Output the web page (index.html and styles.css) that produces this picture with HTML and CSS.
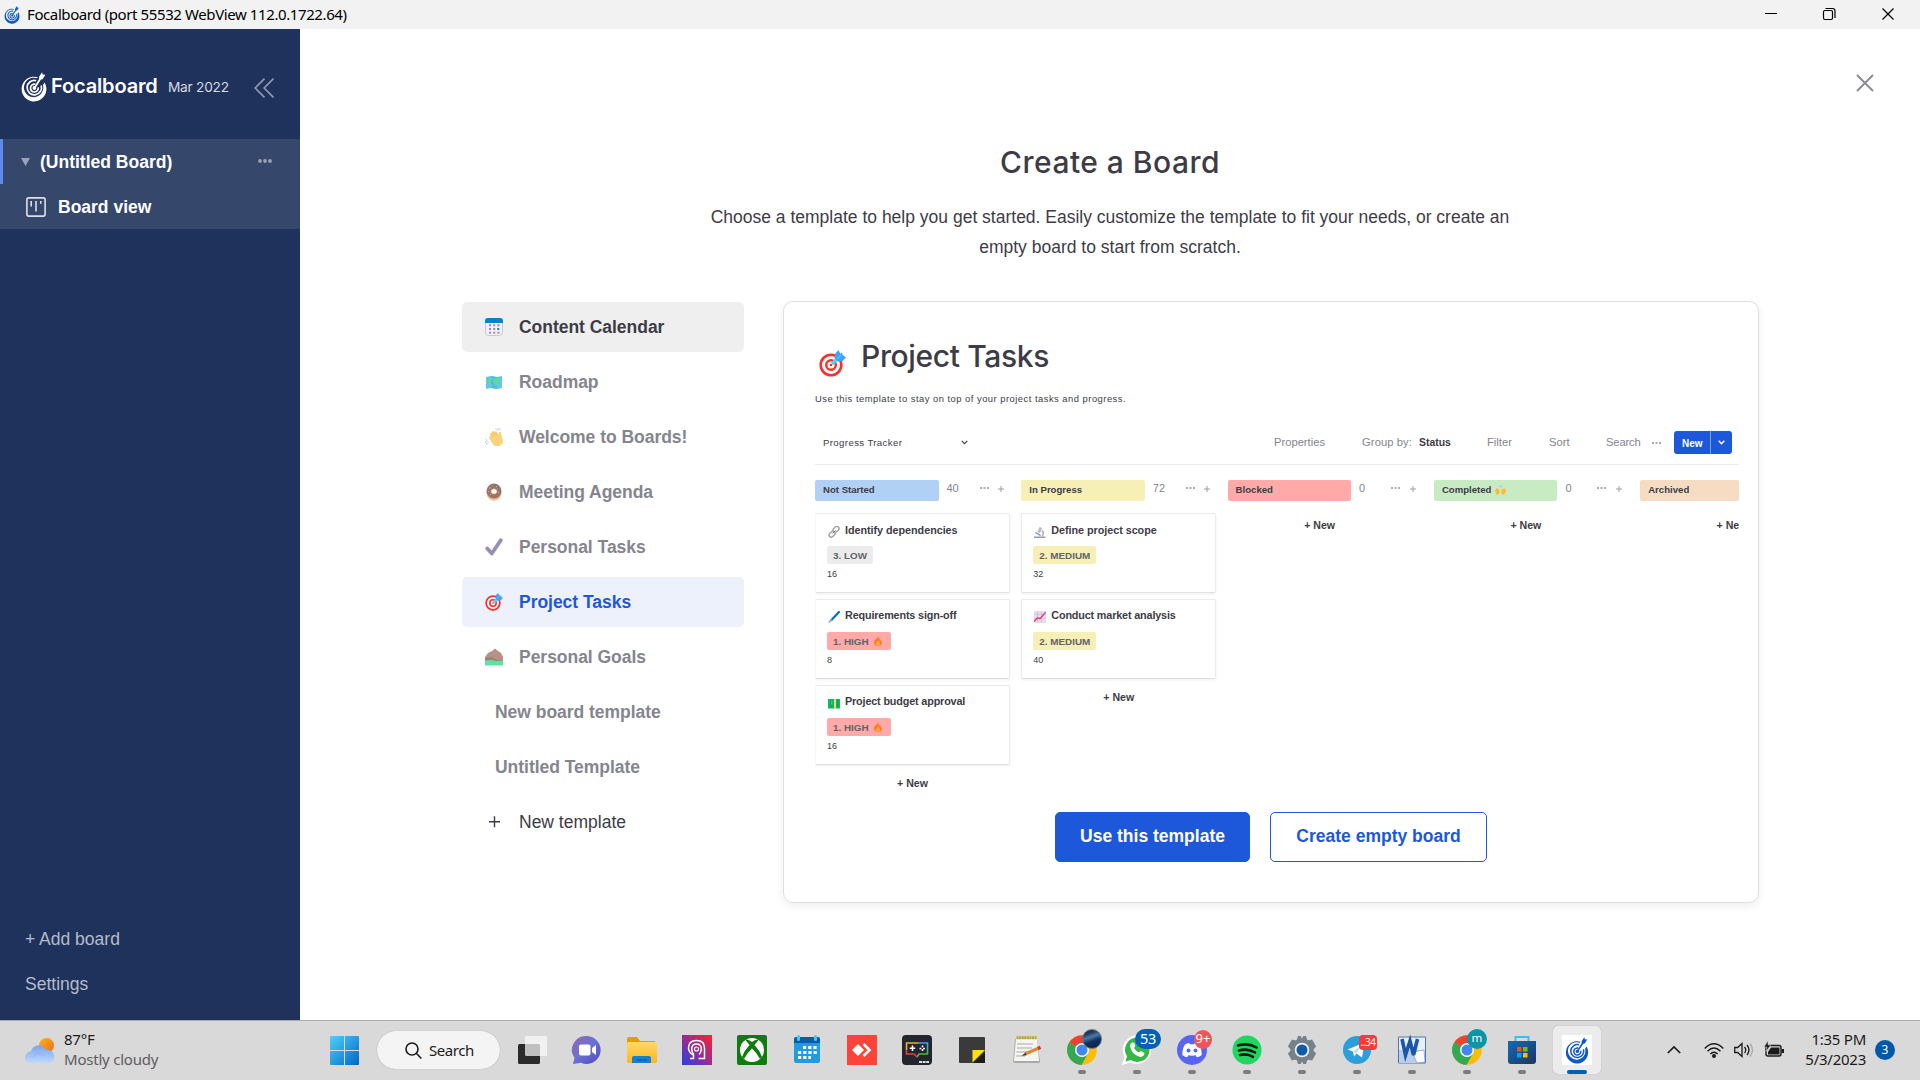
FILE: index.html
```html
<!DOCTYPE html>
<html lang="en">
<head>
<meta charset="utf-8">
<title>Focalboard</title>
<link rel="stylesheet" href="styles.css">
</head>
<body>
<svg class="defs" aria-hidden="true">
  <symbol id="focal" viewBox="0 0 26 30">
    <path fill="currentColor" fill-rule="evenodd" d="M17 5.300A12.400 12.400 0 1 0 23.600 10.600L22 13A9.700 9.700 0 1 1 15.800 6.300z"/>
    <path fill="currentColor" d="M1 19.500a12.300 10.200 0 0 0 24 0q-4 6.300-12 6.300T1 19.500z"/>
    <g fill="none" stroke="currentColor" stroke-width="1.700"><path d="M15.200 8.700A7.200 7.200 0 1 0 20.200 13.500"/><path d="M14.300 12.300A3.900 3.900 0 1 0 17.200 15.300"/></g>
    <circle cx="13.400" cy="16" r="1.900" fill="currentColor"/>
    <path stroke="currentColor" stroke-width="1.800" d="M13.400 16 20.500 5"/>
    <path fill="currentColor" d="m18.200 4.500 2.900-4.300.6 2.200 2.700.4-2.800 4.400-3.400.6z"/>
  </symbol>
  <symbol id="target" viewBox="0 0 27 27">
    <circle cx="12" cy="15" r="10.300" fill="#fff" stroke="#f8312f" stroke-width="2.600"/>
    <circle cx="12" cy="15" r="4.800" fill="#fff" stroke="#f8312f" stroke-width="2.400"/>
    <circle cx="12" cy="15" r="1.300" fill="#f8312f"/>
    <path d="m13 14 6-6" stroke="#50d2ff" stroke-width="3.400"/>
    <path fill="#3fa1fb" d="m15.500 8 .8-4.500L19.500 0l1.800 3.800 1.500-1.300.7 2.200 3.500 2.800-3.500 3.500-4.700.6z"/>
    <path stroke="#50d2ff" stroke-width="1.200" d="m18 9 4-4"/>
  </symbol>
  <symbol id="calendar" viewBox="0 0 18 18">
    <rect x=".5" y=".5" width="17" height="17" rx="3" fill="#f3eef8" stroke="#cdc4d6"/>
    <path fill="#0084ce" d="M0 5V3a3 3 0 0 1 3-3h12a3 3 0 0 1 3 3v2z"/>
    <path d="M4 7.200h11M4 11h8M4 14.700h11" stroke="#998ea4" stroke-width="1.900" stroke-dasharray="2 2.200"/><path fill="#0084ce" d="M12.300 10h2v2h-2z"/>
  </symbol>
  <symbol id="map" viewBox="0 0 18 18">
    <path fill="#63c6f0" d="m1 4 5-1 6 1 5-1v12l-5 1-6-1-5 1z"/><path fill="#3fb4e6" d="m6 3 6 1v12l-6-1z" opacity=".6"/>
    <path fill="#5fd996" d="M2 5h5l1 2-3 1-1 3-2-2zm7 0h6v3l-2 1-1 4-2-1-2-4zm-4 7h3l-1 2H5z"/>
  </symbol>
  <symbol id="wave" viewBox="0 0 18 18">
    <path fill="#fcd27a" d="m4.500 8.500 1-1L5 5.500l1.500-1 1 1-.3-2 1.600-.8 1.200 1.600.3-1 1.500.2 1.400 3.500 1-3 1.500-.3.800 4L17.800 12a5.500 5.500 0 0 1-10 4L4 10z"/>
    <path d="m8 9-2-3M10 8 7.500 4M12 7.500l-2-3" stroke="#f4b860" stroke-width=".8"/>
    <path d="M10 .8q3-.2 4 2.400M12.500 0q3 .5 3.300 2.500M1 11q0 2.500 2.800 3.300M0 13q.5 3 3 3.300" fill="none" stroke="#b5d3f5"/>
  </symbol>
  <symbol id="donut" viewBox="0 0 18 18">
    <ellipse cx="9" cy="10" rx="7.500" ry="7.800" fill="#f2c38c"/><circle cx="9" cy="8" r="7.500" fill="#9b7468"/>
    <ellipse cx="9" cy="8.400" rx="2.700" ry="2.400" fill="#fff" stroke="#f2cfa4"/>
    <path d="M4 5h1.500M11 3l1 1M13 10l1-1M5 11l1 1M3.500 8v1" stroke="#ceb0d6"/><path d="M7 3h1M12 6h1" stroke="#49b4e8"/>
  </symbol>
  <symbol id="check" viewBox="0 0 18 18"><path fill="none" stroke="#998eb5" stroke-width="3.800" stroke-linecap="round" stroke-linejoin="round" d="m2.300 10.500 4.500 5L15.800 2.200"/></symbol>
  <symbol id="mountain" viewBox="0 0 18 18"><path fill="#b59287" d="M0 13V9l3-4 4-2 3-2.500L13 3l3 2 2 4v4z"/><path fill="#8d6d65" d="m0 10 6-1 6 3 6 1v2H0z" opacity=".5"/><path fill="#5be3a2" d="M0 12.500q6-1 9 0t9 .5v4.500H0z"/></symbol>
  <symbol id="link" viewBox="0 0 12 12"><g fill="none" stroke="#a5a5a8" stroke-width="1.500"><rect x="5" y="1.200" width="6.500" height="4.300" rx="2.150" transform="rotate(-45 8 3.500)"/><rect x=".6" y="6" width="6.500" height="4.300" rx="2.150" transform="rotate(-45 4 8)"/></g><path d="m4.500 7.500 3-3" stroke="#777"/></symbol>
  <symbol id="microscope" viewBox="0 0 12 12"><path fill="#9a98a5" d="M0 10.500h11.500V12H0z"/><path d="M8 4.500q2.500 2.500 0 5.500" fill="none" stroke="#b8b7bf" stroke-width="1.800"/><path d="M4.500 6.500 7 1.500" stroke="#bebdc5" stroke-width="2.800"/><path d="m1.500 6.500 5 3" stroke="#4b91e8" stroke-width="1.300"/></symbol>
  <symbol id="pen" viewBox="0 0 12 12"><path d="M3.200 9.200 11 1" stroke="#0074ba" stroke-width="2.200" stroke-linecap="round"/><path d="m.8 11.500 3-3" stroke="#8ba9bd" stroke-width="1.500"/></symbol>
  <symbol id="chart" viewBox="0 0 12 12"><rect width="12" height="12" rx="1" fill="#e5dcef"/><path d="M0 3.500h12M0 7.500h12M3.500 0v12M7.500 0v12" stroke="#c7bdd3" stroke-width=".7"/><path d="m0 10.500 3.500-3.800 2.500 1L11.700 1.200" fill="none" stroke="#f92f60" stroke-width="1.300"/></symbol>
  <symbol id="money" viewBox="0 0 12 12"><path fill="#00c06b" d="M0 2h12v9.500H0z"/><path fill="#07a45e" d="M2 3.500h3V10H2zm7 0h2V10H9z"/><path fill="#f7d36a" d="M6 2h2v9.500H6z"/><path d="M3 5h1.500M3 7h1.500" stroke="#6ff2b5"/></symbol>
  <symbol id="fire" viewBox="0 0 8 10"><path fill="#ff7a35" d="M4.200 0Q4.500 2 6 3.500T8 6.500Q7.500 10 4 10T0 6.500Q0 4 2 3 3.800 2 4.200 0z"/><path fill="#ffb02e" d="M4.300 4.500Q6 6.500 6 8T4 9.600 2 8t2.300-3.500z"/></symbol>
  <symbol id="hands" viewBox="0 0 11 10"><path fill="#ffb92e" d="M0 5.500 1.500 3 4 4.500l.8 2L3.800 9.500H1.500zm11 0L9.500 3 7 4.500l-.8 2 1 3h2.300z"/><path d="M5.500 0v2M3.700.8l.8 1.500M7.300.8l-.8 1.500" stroke="#9ec6e8" stroke-width=".8"/></symbol>
  <symbol id="chrome" viewBox="0 0 30 30">
    <circle cx="15" cy="15" r="14.800" fill="#fbbc05"/>
    <path fill="#ea4335" d="M15 15 2.200 7.600A14.800 14.800 0 0 1 27.800 7.600L27.500 9H15z"/>
    <path fill="#34a853" d="M2.200 7.600A14.800 14.800 0 0 0 14.500 29.800L21 18z"/><path fill="#34a853" d="M2.200 7.600 9 19l6 2 5.500-2-6 10.800A14.800 14.800 0 0 1 2.200 7.600z"/>
    <circle cx="15" cy="15" r="7" fill="#fff"/><circle cx="15" cy="15" r="5.500" fill="#4285f4"/>
  </symbol>
  <linearGradient id="gWin" x2="1" y2="1"><stop stop-color="#4fd0fb"/><stop offset="1" stop-color="#0067c5"/></linearGradient>
  <linearGradient id="gChat" x2="1" y2="1"><stop stop-color="#9167aa"/><stop offset=".5" stop-color="#6a70d8"/><stop offset="1" stop-color="#4d49b8"/></linearGradient>
  <linearGradient id="gSq" x1="0" y1="1" x2="1" y2="0"><stop stop-color="#2440e8"/><stop offset=".55" stop-color="#a52a86"/><stop offset="1" stop-color="#f8242c"/></linearGradient>
  <linearGradient id="gFold" x2="0" y2="1"><stop stop-color="#ffd968"/><stop offset="1" stop-color="#fcb71c"/></linearGradient>
  <linearGradient id="gCloud" x2="0" y2="1"><stop stop-color="#78a4ee"/><stop offset="1" stop-color="#c3dbfa"/></linearGradient>
  <linearGradient id="gStore" x2="1" y2="1"><stop stop-color="#116bba"/><stop offset="1" stop-color="#20345f"/></linearGradient>
  <linearGradient id="gSun" x2="1" y2="1"><stop stop-color="#f6b41c"/><stop offset="1" stop-color="#ee6c1c"/></linearGradient>
</svg>

<header class="titlebar">
  <svg class="titlebar-logo"><use href="#focal"/></svg>
  <span class="titlebar-text">Focalboard (port 55532 WebView 112.0.1722.64)</span>
  <svg class="window-controls" viewBox="0 0 130 14" fill="none" stroke="#000"><path d="M0 6.500h12"/><rect x="58.500" y="3.500" width="9" height="9" rx="1.500" stroke-width="1.200"/><path d="M60.500 1.500h7q2.500 0 2.500 2.500v7" stroke-width="1.200"/><path d="m117.500 1.500 11 11m0-11-11 11" stroke-width="1.200"/></svg>
</header>

<div class="app">
  <aside class="sidebar">
    <div class="brand">
      <svg class="brand-logo"><use href="#focal"/></svg>
      <span class="brand-name">Focalboard</span>
      <span class="brand-version">Mar 2022</span>
      <svg class="collapse" viewBox="0 0 20 20" fill="none" stroke="#8f99ae" stroke-width="1.700"><path d="M10.500.7 1.200 10l9.300 9.300M19.500.7 10.200 10l9.300 9.300"/></svg>
    </div>
    <nav class="boards">
      <div class="board-row active">
        <svg class="tri" viewBox="0 0 9 8"><path fill="#9aa3b5" d="M0 0h9L4.500 8z"/></svg>
        <span>(Untitled Board)</span>
        <svg class="dots" viewBox="0 0 14 4" fill="#9aa3b5"><circle cx="2" cy="2" r="1.900"/><circle cx="7" cy="2" r="1.900"/><circle cx="12" cy="2" r="1.900"/></svg>
      </div>
      <div class="board-row view">
        <svg class="view-icon" viewBox="0 0 20 20" fill="none" stroke="#dde0e7" stroke-width="1.600"><rect x=".9" y=".9" width="18.200" height="18.200" rx="1.800"/><path d="M5.200 4v5.500M10 4v10.500M14.800 4v2.800"/></svg>
        <span>Board view</span>
      </div>
    </nav>
    <div class="sidebar-foot"><div>+ Add board</div><div>Settings</div></div>
  </aside>

  <main class="main">
    <svg class="close" viewBox="0 0 18 18" stroke="#8b8c96" stroke-width="2"><path d="m1 1 16 16M17 1 1 17"/></svg>
    <h1>Create a Board</h1>
    <p class="intro">Choose a template to help you get started. Easily customize the template to fit your needs, or create an<br>empty board to start from scratch.</p>
    <div class="chooser">
      <ul class="templates">
        <li class="hover"><svg><use href="#calendar"/></svg>Content Calendar</li>
        <li><svg><use href="#map"/></svg>Roadmap</li>
        <li><svg><use href="#wave"/></svg>Welcome to Boards!</li>
        <li><svg><use href="#donut"/></svg>Meeting Agenda</li>
        <li><svg><use href="#check"/></svg>Personal Tasks</li>
        <li class="selected"><svg><use href="#target"/></svg>Project Tasks</li>
        <li><svg><use href="#mountain"/></svg>Personal Goals</li>
        <li class="plain">New board template</li>
        <li class="plain">Untitled Template</li>
        <li class="new"><svg viewBox="0 0 18 18" stroke="#3d3c46" stroke-width="1.400"><path d="M4 8.700h11M9.500 3.200v11"/></svg>New template</li>
      </ul>
      <section class="preview">
        <div class="preview-title"><svg><use href="#target"/></svg><h2>Project Tasks</h2></div>
        <p class="preview-desc">Use this template to stay on top of your project tasks and progress.</p>
        <div class="toolbar">
          <span class="view-name">Progress Tracker</span>
          <svg class="chev" viewBox="0 0 7 5" fill="none" stroke="#3d3c46" stroke-width="1.100"><path d="m.7.8 2.800 2.900L6.300.8"/></svg>
          <span class="t-props">Properties</span>
          <span class="t-group">Group by:</span><b class="t-status">Status</b>
          <span class="t-filter">Filter</span>
          <span class="t-sort">Sort</span>
          <span class="t-search">Search</span>
          <svg class="mini-dots" viewBox="0 0 9 2"><path d="M0 1h9" stroke="#909199" stroke-width="1.400" stroke-dasharray="2 1.500"/></svg>
          <div class="new-btn"><span>New</span><svg viewBox="0 0 7 5" fill="none" stroke="#fff" stroke-width="1.500"><path d="m.7.8 2.800 2.900L6.300.8"/></svg></div>
        </div>
        <div class="board">
          <div class="column">
            <div class="col-head"><span class="label blue">Not Started</span><span class="count">40</span><svg class="mini-dots" viewBox="0 0 9 2"><path d="M0 1h9" stroke="#909199" stroke-width="1.400" stroke-dasharray="2 1.500"/></svg><svg class="plus" viewBox="0 0 7 7" stroke="#909199"><path d="M0 3.500h7M3.500 0v7"/></svg></div>
            <div class="cards">
              <article class="card"><h3><svg><use href="#link"/></svg>Identify dependencies</h3><span class="tag grey">3. LOW</span><p>16</p></article>
              <article class="card"><h3><svg><use href="#pen"/></svg>Requirements sign-off</h3><span class="tag red">1. HIGH <svg><use href="#fire"/></svg></span><p>8</p></article>
              <article class="card"><h3><svg><use href="#money"/></svg>Project budget approval</h3><span class="tag red">1. HIGH <svg><use href="#fire"/></svg></span><p>16</p></article>
            </div>
            <div class="add">+ New</div>
          </div>
          <div class="column">
            <div class="col-head"><span class="label yellow">In Progress</span><span class="count">72</span><svg class="mini-dots" viewBox="0 0 9 2"><path d="M0 1h9" stroke="#909199" stroke-width="1.400" stroke-dasharray="2 1.500"/></svg><svg class="plus" viewBox="0 0 7 7" stroke="#909199"><path d="M0 3.500h7M3.500 0v7"/></svg></div>
            <div class="cards">
              <article class="card"><h3><svg><use href="#microscope"/></svg>Define project scope</h3><span class="tag yellow">2. MEDIUM</span><p>32</p></article>
              <article class="card"><h3><svg><use href="#chart"/></svg>Conduct market analysis</h3><span class="tag yellow">2. MEDIUM</span><p>40</p></article>
            </div>
            <div class="add">+ New</div>
          </div>
          <div class="column empty">
            <div class="col-head"><span class="label red">Blocked</span><span class="count">0</span><svg class="mini-dots" viewBox="0 0 9 2"><path d="M0 1h9" stroke="#909199" stroke-width="1.400" stroke-dasharray="2 1.500"/></svg><svg class="plus" viewBox="0 0 7 7" stroke="#909199"><path d="M0 3.500h7M3.500 0v7"/></svg></div>
            <div class="add">+ New</div>
          </div>
          <div class="column empty">
            <div class="col-head"><span class="label green">Completed <svg><use href="#hands"/></svg></span><span class="count">0</span><svg class="mini-dots" viewBox="0 0 9 2"><path d="M0 1h9" stroke="#909199" stroke-width="1.400" stroke-dasharray="2 1.500"/></svg><svg class="plus" viewBox="0 0 7 7" stroke="#909199"><path d="M0 3.500h7M3.500 0v7"/></svg></div>
            <div class="add">+ New</div>
          </div>
          <div class="column empty last">
            <div class="col-head"><span class="label orange">Archived</span></div>
            <div class="add">+ Ne</div>
          </div>
        </div>
        <div class="actions"><button class="primary">Use this template</button><button class="outline">Create empty board</button></div>
      </section>
    </div>
  </main>
</div>

<footer class="taskbar">
  <div class="weather">
    <svg viewBox="0 0 30 26"><circle cx="21.500" cy="7.500" r="7.500" fill="url(#gSun)"/><path fill="url(#gCloud)" d="M6 25.500A6 6 0 0 1 6 13.500 8 8 0 0 1 21 12a6.800 6.800 0 0 1 3 13.500z"/><path d="M8 19q5-7 11-1" fill="none" stroke="#7fa7ee" opacity=".6"/></svg>
    <div class="weather-text"><div>87°F</div><div class="dim">Mostly cloudy</div></div>
  </div>
  <svg class="start" viewBox="0 0 29 29" fill="url(#gWin)"><path d="M1 0h13v14H0V1a1 1 0 0 1 1-1zM15 0h13a1 1 0 0 1 1 1v13H15zM0 15h14v14H1a1 1 0 0 1-1-1zM15 15h14v13a1 1 0 0 1-1 1H15z"/></svg>
  <div class="search"><svg viewBox="0 0 17 17" fill="none" stroke="#1b1b1b" stroke-width="1.600"><circle cx="7" cy="7" r="6"/><path d="m11.300 11.300 5 5.200"/></svg><span>Search</span></div>
  <div class="apps">
    <div class="app-cell"><svg viewBox="0 0 30 30"><rect x="1" y="9" width="22" height="20" rx="1.500" fill="#2b2b2b"/><rect x="8" y="1" width="22" height="20" rx="1.500" fill="#fafafa" opacity=".72"/></svg></div>
    <div class="app-cell"><svg viewBox="0 0 30 30"><path fill="url(#gChat)" d="M15 1a14 14 0 1 1-6 26.800L1 29l1.500-6A14 14 0 0 1 15 1z"/><rect x="7" y="9.500" width="11.500" height="11" rx="2" fill="#fff"/><path fill="#fff" d="m20 13 4-3v10l-4-3z"/></svg></div>
    <div class="app-cell"><svg viewBox="0 0 30 30"><path fill="#e0a000" d="M0 4q0-2 2-2h8l3 4h15v9H0z"/><rect y="7" width="30" height="21" rx="1.500" fill="url(#gFold)"/><path fill="#1180d6" d="M5 28v-5q0-2 2-2h15q2 0 2 2v5z"/><path d="M10 25h10" stroke="#0a5096"/></svg></div>
    <div class="app-cell"><svg viewBox="0 0 30 30"><path fill="url(#gSq)" d="M0 0h30v30H0z"/><g fill="none" stroke="#fff" stroke-width="1.500"><path d="M8 23.500h3.500V20Q6.500 17.500 6.500 13q0-7.500 8-7.500t8 7.500v10.500h-6"/><path d="M12 19.500q-2.300-2-2.300-5.500 0-5 4.800-5t4.800 5q0 3.500-2.300 5.500"/></g><circle cx="14.500" cy="14" r="2" fill="none" stroke="#fff" stroke-width="1.200"/></svg></div>
    <div class="app-cell"><svg viewBox="0 0 30 30"><rect width="30" height="30" rx="2" fill="#107c10"/><circle cx="15" cy="15" r="12" fill="#fff"/><path fill="#107c10" d="M8 4.500q4-.5 7 2.500 3-3 7-2.500l-4.500 5.500q5 5 7.500 12l-2 2Q20 18 15 13.500 10 18 7 24l-2-2q2.500-7 7.500-12z"/></svg></div>
    <div class="app-cell"><svg viewBox="0 0 30 30"><rect x="2" y="3" width="26" height="25" rx="2" fill="#1f9be0"/><path fill="#0b5ca8" d="M2 8V4q0-2 2-2h22q2 0 2 2v4z"/><path stroke="#3ccbf4" stroke-width="3" stroke-linecap="round" d="M6.500 1.500v3M23.500 1.500v3"/><path stroke="#fff" stroke-width="3.200" stroke-dasharray="3.200 2" d="M11 12.500h14M6 17.500h19M6 22.500h13"/></svg></div>
    <div class="app-cell"><svg viewBox="0 0 30 30"><path fill="#fe4438" d="M0 0h30v30H0z"/><path fill="#fff" d="m5 15 6-6 6 6-6 6z"/><path fill="none" stroke="#fff" stroke-width="2.600" d="m16.500 9 6 6-6 6"/></svg></div>
    <div class="app-cell"><svg viewBox="0 0 30 30"><rect width="30" height="30" rx="4" fill="#23262f"/><g fill="none" stroke-width="1.600"><path stroke="#e9b32f" d="M4.500 15V8H16"/><path stroke="#4f9fe8" d="M16 8h9.500v6"/><path stroke="#4cbb45" d="M25.500 14v5H17l-2 3"/><path stroke="#e7403c" d="M4.500 15v4H12l3 3"/></g><path stroke="#fff" stroke-width="1.600" d="M10.500 10.500v5.500M7.700 13.300h5.500"/><path stroke="#fff" stroke-width="1.600" stroke-dasharray="1.800 1.800" d="M20.500 10.500v6M17.500 13.500h6"/><path d="M17 27h10" stroke="#ddd" stroke-width="2" stroke-dasharray="3 .6"/></svg></div>
    <div class="app-cell"><svg viewBox="0 0 30 30"><rect x="2" y="2" width="26" height="26" rx="1" fill="#3a3a3a"/><path fill="#1c1c1c" d="M16 28h12V17z"/><path fill="#fde014" d="M15.500 15H28L15.500 27.500z"/></svg></div>
    <div class="app-cell"><svg viewBox="0 0 30 30"><path fill="#aaa" d="M3 4h22l3 23q0 1-2 1H3q-2 0-1.800-2z"/><path fill="#f5f5f2" d="M4 4h21l2 22H2z"/><path stroke="#b9a22d" stroke-width="3" stroke-dasharray="2 .6" d="M4.500 2.800h20"/><path stroke="#a9a9a9" d="M5 9h16M5 13h15M4.500 17h11M4 21h9"/><path stroke="#d98b38" stroke-width="3.200" d="m13 19 14-6"/><path stroke="#c4373a" stroke-width="3.200" d="m26 13.500 2.500-1.200"/><path fill="#333" d="m9.500 20.800 4-3 1 2.500z"/></svg></div>
    <div class="app-cell run"><svg viewBox="0 0 30 30"><use href="#chrome"/></svg><i class="avatar earth"></i></div>
    <div class="app-cell run"><svg viewBox="0 0 30 30"><path fill="#fff" d="M15 0a14.500 14.500 0 1 1-6.500 27.500L0 30l2.500-8.500A14.500 14.500 0 0 1 15 0z"/><path fill="#35b845" d="M15 2.500A12.200 12.200 0 1 1 8.800 25L3.500 26.500 5 21.300A12.200 12.200 0 0 1 15 2.500z"/><path fill="#fff" d="M10 7.500q2-.5 2.500 1l.8 2.500-1.300 2q1.500 3 5 4.500l2-1.500 3.500 2q-.5 4-4.500 4Q9.500 19.500 8 11q0-2.500 2-3.500z"/></svg><i class="badge blue-badge">53</i></div>
    <div class="app-cell run"><svg viewBox="0 0 30 30"><circle cx="15" cy="15" r="15" fill="#5865f2"/><path fill="#fff" d="M10 8.500 8 9.500Q5 14 5.300 20q2 1.800 5 2.300l1-2q3.700.8 7.400 0l1 2q3-.5 5-2.300.3-6-2.700-10.500l-4-1.500-1 1.200h-4l-1-1.200z"/><circle cx="11.500" cy="15.500" r="2" fill="#5865f2"/><circle cx="18.500" cy="15.500" r="2" fill="#5865f2"/></svg><i class="badge red-badge">9+</i></div>
    <div class="app-cell run"><svg viewBox="0 0 30 30"><circle cx="15" cy="15" r="14.500" fill="#1ed760"/><path d="M6 10.500q10-3 18.500 2M7 15.500q8.500-2.500 16 2M8 20q7-1.800 13 1.800" fill="none" stroke="#0c1a10" stroke-width="2.600" stroke-linecap="round"/></svg></div>
    <div class="app-cell run"><svg viewBox="0 0 30 30"><g fill="#77818a"><circle cx="15" cy="15" r="11.500"/><path id="tooth" d="m9.500 6 1.500-5h8l1.500 5z"/><use href="#tooth" transform="rotate(60 15 15)"/><use href="#tooth" transform="rotate(120 15 15)"/><use href="#tooth" transform="rotate(180 15 15)"/><use href="#tooth" transform="rotate(240 15 15)"/><use href="#tooth" transform="rotate(300 15 15)"/></g><path fill="#d9d9d9" d="m13 0 2 3.500L17 0zM13 30l2-3.500 2 3.500z"/><circle cx="15" cy="15" r="7.300" fill="#eee"/><circle cx="15" cy="15" r="5.500" fill="#0f5ba8"/></svg></div>
    <div class="app-cell run"><svg viewBox="0 0 30 30"><circle cx="15" cy="15" r="14" fill="#2a9fdb"/><path fill="#fff" d="m5.500 14.500 17-7-2.500 15-5.500-4-2.500 3-1-5z"/><path d="m11 16.500 8.500-6-5 8" fill="#c3ddec"/></svg><i class="badge square-badge">..34</i></div>
    <div class="app-cell run"><svg viewBox="0 0 30 30"><path fill="#e8effa" stroke="#4a76b8" d="M1.500 2h27v26h-27z"/><path fill="#b9cdec" d="M2 15h20v13H2z"/><path fill="#fff" stroke="#6e93cc" stroke-width=".7" d="m15 17 12-2 1 12-8 1z"/><path fill="none" stroke="#1b55a8" stroke-width="3.600" d="m5 4 3.500 16L13 6l3.500 14L20.500 4"/></svg></div>
    <div class="app-cell run"><svg viewBox="0 0 30 30"><use href="#chrome"/></svg><i class="avatar teal">m</i></div>
    <div class="app-cell run"><svg viewBox="0 0 30 30"><path fill="none" stroke="#35c1f1" stroke-width="2" d="M8.500 7V2h13v5"/><path fill="url(#gStore)" d="M1 6h28v20q0 3-3 3H4q-3 0-3-3z"/><path fill="#f25022" d="M10 12h4.500v4.500H10z"/><path fill="#7fba00" d="M16 12h4.500v4.500H16z"/><path fill="#00a4ef" d="M10 18h4.500v4.500H10z"/><path fill="#ffb900" d="M16 18h4.500v4.500H16z"/></svg></div>
    <div class="app-cell run current"><span class="tile"><svg class="focal-app"><use href="#focal"/></svg></span></div>
  </div>
  <div class="tray">
    <svg class="caret" viewBox="0 0 14 8" fill="none" stroke="#1b1b1b" stroke-width="1.700"><path d="m.8 7 6.200-6 6.200 6"/></svg>
    <svg class="wifi" viewBox="0 0 20 15" fill="none" stroke="#1b1b1b" stroke-width="1.400"><path d="M.7 5.500q9.300-9.300 18.600 0M3.500 8.200q6.500-6.500 13 0M6.300 11q3.700-3.700 7.400 0"/><circle cx="10" cy="13" r="1.300" fill="#1b1b1b"/></svg>
    <svg class="vol" viewBox="0 0 20 16" fill="none" stroke="#1b1b1b" stroke-width="1.300"><path d="M.7 5.500h3L8 1.500v13L3.700 10.500h-3zM10.500 5q2.500 3 0 6M13 3q4 5 0 10"/><path d="M16 1.500q5 6.500 0 13" stroke="#aaa"/></svg>
    <svg class="bat" viewBox="0 0 20 16"><rect x="2" y="3.500" width="15" height="10.500" rx="2" fill="none" stroke="#1b1b1b" stroke-width="1.400"/><path d="M4 12.500V10l3-4.500h8.500v7z" fill="#1b1b1b"/><path d="M17.500 7H20v4h-2.500z" fill="#1b1b1b"/><path d="M4-1.200 0 5h3L2 9.500 6.800 3H4z" fill="#1b1b1b" stroke="#d9d9d9" stroke-width=".5"/></svg>
    <div class="clock"><div>1:35 PM</div><div>5/3/2023</div></div>
    <span class="notif">3</span>
  </div>
</footer>
</body>
</html>
```
FILE: styles.css
```css
* { box-sizing: border-box; margin: 0; padding: 0; }
body { width: 1920px; height: 1080px; display: flex; flex-direction: column; overflow: hidden; background: #fff; color: #3d3c46; font-family: "Liberation Sans", Arial, sans-serif; font-size: 17.5px; }
svg { display: block; flex: none; overflow: visible; }
.defs { position: absolute; width: 0; height: 0; }

.titlebar { height: 29px; flex: none; background: #f2f2f2; display: flex; align-items: center; padding-left: 4px; color: #000; font: 15px "Noto Sans", sans-serif; }
.titlebar-logo { width: 16px; height: 18px; color: #1158c7; }
.titlebar-text { margin-left: 7px; padding-bottom: 2px; letter-spacing: -.4px; white-space: nowrap; }
.window-controls { width: 130px; height: 14px; margin-left: auto; margin-right: 25px; margin-bottom: 1px; }

.app { flex: 1; display: flex; min-height: 0; }
.sidebar { width: 300px; flex: none; background: #1f325c; color: #fff; display: flex; flex-direction: column; }
.brand { height: 110px; display: flex; align-items: center; padding: 8px 0 0 21px; font-family: Inter, sans-serif; }
.brand-logo { width: 26px; height: 30px; margin-top: -2px; }
.brand-name { margin: -4px 0 0 4px; width: 106px; font-size: 20px; font-weight: 600; letter-spacing: -.15px; }
.brand-version { margin: -3px 0 0 11px; width: 60px; font-size: 13.700px; color: #d5d9e2; letter-spacing: -.25px; white-space: nowrap; }
.collapse { width: 20px; height: 20px; margin-left: 26px; }
.boards { background: #35476b; font-weight: bold; }
.board-row { height: 45px; display: flex; align-items: center; }
.board-row span { padding-top: 2px; }
.board-row.active { border-left: 3px solid #5d89ea; padding-left: 18px; }
.tri { width: 9px; height: 8px; margin-right: 10px; }
.dots { width: 14px; height: 4px; margin-left: auto; margin-right: 28px; margin-bottom: 1px; }
.board-row.view { padding-left: 26px; }
.view-icon { width: 20px; height: 20px; margin-right: 12px; }
.sidebar-foot { margin-top: auto; padding: 0 0 13px 25px; line-height: 45px; color: #b5bccb; }

.main { flex: 1; position: relative; padding: 113px 0 0 162px; }
.close { position: absolute; left: 1556px; top: 45px; width: 18px; height: 18px; }
h1 { width: 1296px; text-align: center; font: 500 30px/40px Inter, sans-serif; letter-spacing: .47px; }
.intro { width: 1296px; margin-top: 20px; text-align: center; line-height: 30px; letter-spacing: 0; }
.chooser { margin-top: 39px; display: flex; gap: 39px; }
.templates { width: 282px; list-style: none; padding-top: 1px; display: flex; flex-direction: column; gap: 5px; }
.templates li { height: 50px; display: flex; align-items: center; padding-left: 23px; border-radius: 5px; font-weight: bold; letter-spacing: -.03px; color: #84858e; }
.templates svg { width: 18px; height: 18px; margin-right: 16px; }
.templates .hover { background: #efefef; color: #3d3c46; }
.templates .selected { background: #edf1fc; color: #1c58d9; }
.templates .plain { padding-left: 33px; }
.templates .new { font-weight: normal; letter-spacing: 0; color: #3d3c46; }

.preview { width: 976px; height: 602px; border: 1px solid #dfdfe0; border-radius: 10px; box-shadow: 0 3px 8px rgba(0,0,0,.07); padding: 34px 19px 0 31px; }
.preview-title { height: 40px; display: flex; padding-left: 4px; }
.preview-title svg { width: 27px; height: 27px; margin-top: 14px; }
h2 { margin-left: 15px; font: 500 30px/40px Inter, sans-serif; letter-spacing: -.35px; }
.preview-desc { margin-top: 13px; font-size: 9.4px; line-height: 20px; letter-spacing: .49px; }
.toolbar { height: 43px; margin-top: 13px; border-bottom: 1px solid #ececed; display: flex; align-items: center; padding: 0 0 1px 8px; font-size: 11.2px; color: #84858e; white-space: nowrap; }
.toolbar > span { padding-bottom: 1px; }
.view-name { width: 138px; font-size: 9.6px; letter-spacing: .39px; color: #3d3c46; }
.chev { width: 7px; height: 5px; }
.t-props { margin-left: 306px; width: 88px; }
.t-group { width: 57px; letter-spacing: .1px; }
.t-status { width: 68px; color: #3d3c46; font-size: 10.4px; }
.t-filter { width: 62px; }
.t-sort { width: 57px; }
.t-search { width: 46px; letter-spacing: -.15px; }
.mini-dots { width: 9px; height: 2px; }
.new-btn { margin-left: 13px; width: 58px; height: 23px; display: flex; align-items: center; border-radius: 3px; background: #1c58d9; color: #fff; font-size: 10px; font-weight: bold; }
.new-btn span { width: 37px; height: 23px; line-height: 25px; padding-left: 8px; border-right: 1px solid #7d9fe9; }
.new-btn svg { width: 7px; height: 5px; margin-left: 7px; }

.board { height: 332px; margin-top: 15px; display: flex; gap: 11.300px; overflow: hidden; }
.column { width: 195px; flex: none; }
.col-head { height: 21px; display: flex; align-items: flex-start; }
.label { width: 123.500px; height: 21px; display: flex; align-items: center; padding: 0 0 2px 8px; border-radius: 2px; font-size: 9.6px; font-weight: bold; }
.label svg { width: 11px; height: 10px; margin: 1px 0 0 4px; }
.blue { background: #b1d0f6; } .yellow { background: #f7f0b6; } .red { background: #ffa9a9; } .green { background: #c8ebc4; } .orange { background: #f6dcc3; } .grey { background: #ececec; }
.count { width: 33px; margin: 1px 0 0 8px; font-size: 11px; line-height: 14px; color: #84858e; }
.empty .count { width: 32px; }
.col-head .mini-dots { margin-top: 7px; }
.plus { width: 6px; height: 6px; margin: 6px 0 0 9.500px; }
.cards { margin-top: 12px; display: flex; flex-direction: column; gap: 6px; }
.card { height: 80px; padding: 8px 0 0 11px; border: 1px solid #ebebec; border-bottom-color: #e0e0e2; border-radius: 2px; box-shadow: 0 1px 3px rgba(0,0,0,.07); }
.column:first-child .card { border-left-color: #f7f7f8; }
.card h3 { height: 16px; display: flex; align-items: center; font-size: 10.800px; letter-spacing: -.04px; white-space: nowrap; }
.card + .card h3 { letter-spacing: -.15px; margin: -1px 0 1px; }
.card h3 svg { width: 12px; height: 12px; margin-right: 5px; margin-left: 1px; margin-top: 3px; }
.tag { display: inline-flex; align-items: center; height: 18px; margin-top: 8px; padding: 0 6px; border-radius: 2px; font-size: 9.900px; font-weight: bold; color: #62626a; white-space: nowrap; }
.tag svg { width: 8px; height: 10px; margin: 0 3px 0 5px; }
.card p { font-size: 9px; line-height: 14px; margin-top: 3px; }
.add { margin-top: 10px; font-size: 10.6px; line-height: 16px; font-weight: bold; text-align: center; }
.empty .add { margin-top: 16px; padding-right: 11px; }
.last { width: 99px; overflow: hidden; }
.last .add { padding-right: 0; text-align: right; }
.actions { display: flex; justify-content: center; gap: 20px; margin-left: -12px; }
.actions button { height: 50px; padding-bottom: 2px; border-radius: 5px; border: 1px solid #1c58d9; font: bold 17.500px "Liberation Sans", Arial, sans-serif; }
.primary { width: 195px; background: #1c58d9; color: #fff; }
.outline { width: 217px; background: #fff; color: #1c58d9; }

.taskbar { height: 60px; flex: none; display: flex; align-items: center; background: #d9d9d9; border-top: 1px solid #adadad; color: #1b1b1b; font: 15px "Noto Sans", sans-serif; }
.weather { width: 330px; display: flex; align-items: center; padding-left: 25px; line-height: 20px; }
.weather svg { width: 30px; height: 26px; margin-right: 9px; }
.weather-text, .clock { margin-top: -3px; letter-spacing: -.22px; white-space: nowrap; }
.clock { letter-spacing: -.25px; }
.dim { color: #5d5d5d; }
.start { width: 29px; height: 29px; }
.search { width: 123px; height: 38px; margin: -1px 0 0 18px; display: flex; align-items: center; padding-left: 28px; border-radius: 19px; background: #f4f4f4; box-shadow: 0 0 1px rgba(0,0,0,.3); letter-spacing: -.45px; }
.search span { padding-bottom: 1px; }
.search svg { width: 17px; height: 17px; margin-right: 7px; }
.apps { display: flex; margin-left: 4px; }
.app-cell { width: 55px; height: 59px; position: relative; display: flex; align-items: center; justify-content: center; }
.app-cell svg { width: 30px; height: 30px; margin-top: -1px; }
.run::after { content: ""; position: absolute; left: 23.500px; bottom: 6px; width: 8px; height: 4px; border-radius: 2px; background: #7c7c7c; }
.current::after { left: 17.500px; width: 20px; background: #0061b4; }
.current::before { content: ""; position: absolute; left: 3.500px; top: 5px; width: 48px; height: 48px; border-radius: 5px; background: #ececec; box-shadow: 0 0 1px rgba(0,0,0,.3); }
.tile { position: relative; width: 30px; height: 30px; margin-top: -1px; background: #fff; display: flex; align-items: center; justify-content: center; color: #1158c7; }
.app-cell .focal-app { width: 24px; height: 27px; margin: 0; }
.avatar, .badge { position: absolute; top: 8px; left: 28px; width: 20px; height: 20px; border-radius: 50%; color: #fff; font-style: normal; font-size: 13px; line-height: 18px; text-align: center; }
.earth { background: linear-gradient(160deg, #1d3557 20%, #4a79a8 40%, #10305f 60%, #08204a); border: 1px solid #6b7480; }
.teal { background: #0797a7; font-size: 11.500px; line-height: 17px; }
.blue-badge { width: 26px; left: 26px; border-radius: 10px; background: #0061b4; font-size: 14.500px; letter-spacing: -.4px; }
.red-badge { top: 9px; left: 30px; width: 18px; height: 19px; line-height: 17px; background: #f0545a; }
.square-badge { top: 14px; left: 30px; width: 18px; height: 15px; border-radius: 4px; background: #f63c33; font-size: 10px; line-height: 14px; letter-spacing: -.5px; }
.tray { margin-left: auto; display: flex; align-items: center; padding-right: 25px; }
.tray > svg, .notif { margin-top: -1px; }
.caret { width: 14px; height: 8px; margin-right: 23px; }
.wifi { width: 20px; height: 15px; margin-right: 10px; }
.vol { width: 20px; height: 16px; margin-right: 10px; }
.bat { width: 20px; height: 16px; }
.clock { width: 82px; text-align: right; line-height: 20px; }
.notif { width: 20px; height: 20px; margin-left: 9px; border-radius: 50%; background: #0058a8; color: #fff; font-size: 12px; line-height: 19px; text-align: center; }
```
